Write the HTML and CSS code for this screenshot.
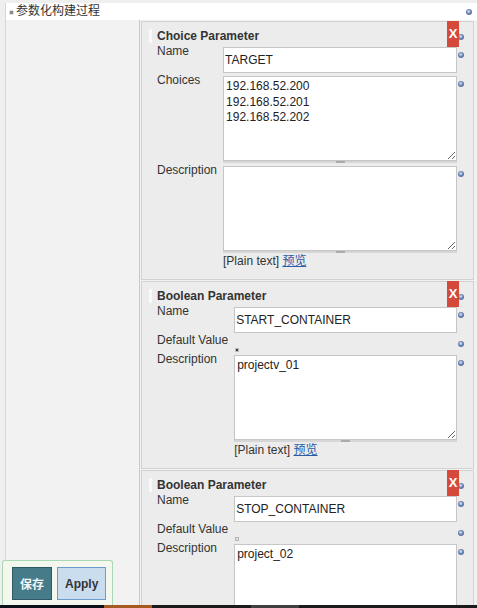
FILE: index.html
```html
<!DOCTYPE html>
<html lang="zh">
<head>
<meta charset="utf-8">
<title>参数化构建过程</title>
<link rel="stylesheet" href="styles.css">
</head>
<body>
<div class="page">
  <div class="hdr">
    <span class="collapse"></span>
    <span class="hdr-text">参数化构建过程</span>
    <span class="hdr-help"></span>
  </div>
  <div class="main">
    <div class="side"></div>
    <div class="panels">

      <div class="panel">
        <button class="del" type="button">X</button>
        <div class="ptitle">Choice Parameter</div><span class="help t"></span>
        <div class="lbl">Name</div><div class="fld"><input class="txt" type="text" value="TARGET"></div><span class="help"></span>
        <div class="lbl">Choices</div><div class="fld"><textarea class="ta">192.168.52.200
192.168.52.201
192.168.52.202</textarea><div class="grip"></div></div><span class="help"></span>
        <div class="lbl">Description</div><div class="fld"><textarea class="ta"></textarea><div class="grip"></div></div><span class="help"></span>
        <div class="lbl"></div><div class="fld preview">[Plain text] <a href="#">预览</a></div><span></span>
      </div>

      <div class="panel">
        <button class="del" type="button">X</button>
        <div class="ptitle">Boolean Parameter</div><span class="help t"></span>
        <div class="lbl">Name</div><div class="fld"><input class="txt" type="text" value="START_CONTAINER"></div><span class="help"></span>
        <div class="lbl">Default Value</div><div class="fld cbfld"><span class="cb on"></span></div><span class="help"></span>
        <div class="lbl">Description</div><div class="fld"><textarea class="ta">projectv_01</textarea><div class="grip"></div></div><span class="help"></span>
        <div class="lbl"></div><div class="fld preview">[Plain text] <a href="#">预览</a></div><span></span>
      </div>

      <div class="panel last">
        <button class="del" type="button">X</button>
        <div class="ptitle">Boolean Parameter</div><span class="help t"></span>
        <div class="lbl">Name</div><div class="fld"><input class="txt" type="text" value="STOP_CONTAINER"></div><span class="help"></span>
        <div class="lbl">Default Value</div><div class="fld cbfld"><span class="cb"></span></div><span class="help"></span>
        <div class="lbl">Description</div><div class="fld"><textarea class="ta">project_02</textarea><div class="grip"></div></div><span class="help"></span>
      </div>

    </div>
  </div>
</div>

<div class="bottom-bar">
  <button class="btn save" type="button">保存</button>
  <button class="btn apply" type="button">Apply</button>
</div>

<div class="taskbar">
  <span class="tb1"></span><span class="tb2"></span><span class="tb3"></span><span class="tb4"></span><span class="tb5"></span>
</div>
</body>
</html>
```

FILE: styles.css
```css
html, body {
  margin: 0;
  padding: 0;
  overflow: hidden;
  background: #efefef;
  font-family: "Liberation Sans", Arial, "Noto Sans CJK SC", sans-serif;
  font-size: 12px;
  color: #333;
}

.page {
  margin: 3px 0 0 5px;
  border-left: 1px solid #d6d6d6;
}

.hdr {
  height: 17px;
  background: #fff;
  display: flex;
  align-items: flex-start;
  padding: 0 5px 0 4px;
}

.collapse {
  width: 3px;
  height: 3px;
  margin-top: 8px;
  background: #8a8a8a;
  box-shadow: 0 0 0 0.5px #bbb;
}

.hdr-text {
  margin-left: 3px;
  line-height: 17px;
  font-family: "Liberation Sans", "Noto Sans CJK SC", sans-serif;
  color: #333;
}

.hdr-help,
.help {
  display: block;
  width: 6px;
  height: 6px;
  border-radius: 50%;
  background: radial-gradient(circle at 45% 40%, #dfe6f2 0, #aebfdd 1px, #7089b8 2px, #5b73a3 3px);
}

.hdr-help {
  margin: 6px 0 0 auto;
}

.main {
  display: grid;
  grid-template-columns: 134px 1fr;
}

.side {
  background: #f2f2f2;
  border-right: 1px solid #c9c9c9;
  min-height: 600px;
}

.panels {
  padding: 1px 3px 0 1px;
  background: #f2f2f2;
}

.panel {
  position: relative;
  background: #ececec;
  border: 1px solid #d2d2d2;
  padding: 7px 0 11px 15px;
  margin-bottom: 1px;
  display: grid;
  grid-template-columns: auto 1fr 16px;
  align-items: start;
}

.panel.last {
  padding-bottom: 40px;
}

.ptitle {
  grid-column: 1 / 3;
  font-weight: bold;
  line-height: 14px;
  margin: 0 0 1px -8px;
  padding-left: 5px;
  border-left: 3px solid #f9f9f9;
  color: #333;
}

.lbl {
  line-height: 14px;
  padding-right: 6px;
  white-space: nowrap;
  color: #333;
}

.fld {
  margin-top: 3px;
  min-width: 0;
}

.txt {
  display: block;
  width: 100%;
  height: 26px;
  box-sizing: border-box;
  margin: 0;
  padding: 0 1px;
  border: 1px solid #c6c6c6;
  background: #fff;
  font-family: "Liberation Sans", Arial, sans-serif;
  font-size: 12px;
  color: #222;
  outline: none;
}

.ta {
  display: block;
  width: 100%;
  height: 85px;
  box-sizing: border-box;
  margin: 0;
  padding: 2px 2px;
  border: 1px solid #c6c6c6;
  background: #fff;
  font-family: "Liberation Sans", Arial, sans-serif;
  font-size: 12px;
  line-height: 15.6px;
  color: #222;
  outline: none;
  resize: vertical;
}

.grip {
  height: 2px;
  background: #d6d6d6;
}

.grip::after {
  content: "";
  display: block;
  width: 9px;
  height: 2px;
  margin: 0 auto;
  background: #ababab;
}

.preview {
  margin-top: 1px;
  line-height: 14px;
  white-space: nowrap;
}

.preview a {
  color: #2b5aa6;
  text-decoration: underline;
  font-family: "Liberation Sans", "Noto Sans CJK SC", sans-serif;
}

.cbfld {
  margin-top: 15px;
}

.cb {
  display: block;
  width: 2px;
  height: 2px;
  margin-left: 1px;
  background: #e2e2e2;
  border: 1px solid #b5b5b5;
}

.cb.on {
  background: #3c3c3c;
  border-color: #bdbdbd;
}

.help {
  margin: 8px 0 0 1px;
}

.help.t {
  margin-top: 5px;
}

.del {
  position: absolute;
  top: -1px;
  right: 14px;
  width: 12px;
  height: 26px;
  margin: 0;
  padding: 0;
  border: 0;
  background: #d4493a;
  color: #fff;
  font-family: "Liberation Sans", Arial, sans-serif;
  font-weight: bold;
  font-size: 13px;
  line-height: 24px;
  text-align: center;
}

.bottom-bar {
  position: fixed;
  left: 2px;
  bottom: 0;
  width: 111px;
  height: 48px;
  box-sizing: border-box;
  background: #f4f7ee;
  border: 1px solid #a9d8b4;
  border-bottom: 0;
  border-radius: 3px 3px 0 0;
  padding: 6px 0 0 9px;
  display: flex;
  align-items: flex-start;
  gap: 5px;
}

.btn {
  height: 33px;
  margin: 0;
  padding: 0 7px;
  box-sizing: border-box;
  border: 1px solid;
  font-family: "Liberation Sans", "Noto Sans CJK SC", sans-serif;
  font-weight: bold;
  font-size: 12px;
  border-radius: 0;
}

.save {
  background: #467b89;
  border-color: #2d5865;
  color: #f2f6f7;
}

.apply {
  background: #c9ddef;
  border-color: #6c9bd2;
  color: #333;
}

.taskbar {
  position: fixed;
  left: 0;
  right: 0;
  bottom: 0;
  height: 3px;
  display: flex;
}

.tb1 { width: 104px; background: #0b111b; }
.tb2 { width: 48px; background: #a55a21; }
.tb3 { width: 99px; background: #1b1b1b; }
.tb4 { width: 48px; background: #404040; }
.tb5 { flex: 1; background: #1b1b1b; }
```
